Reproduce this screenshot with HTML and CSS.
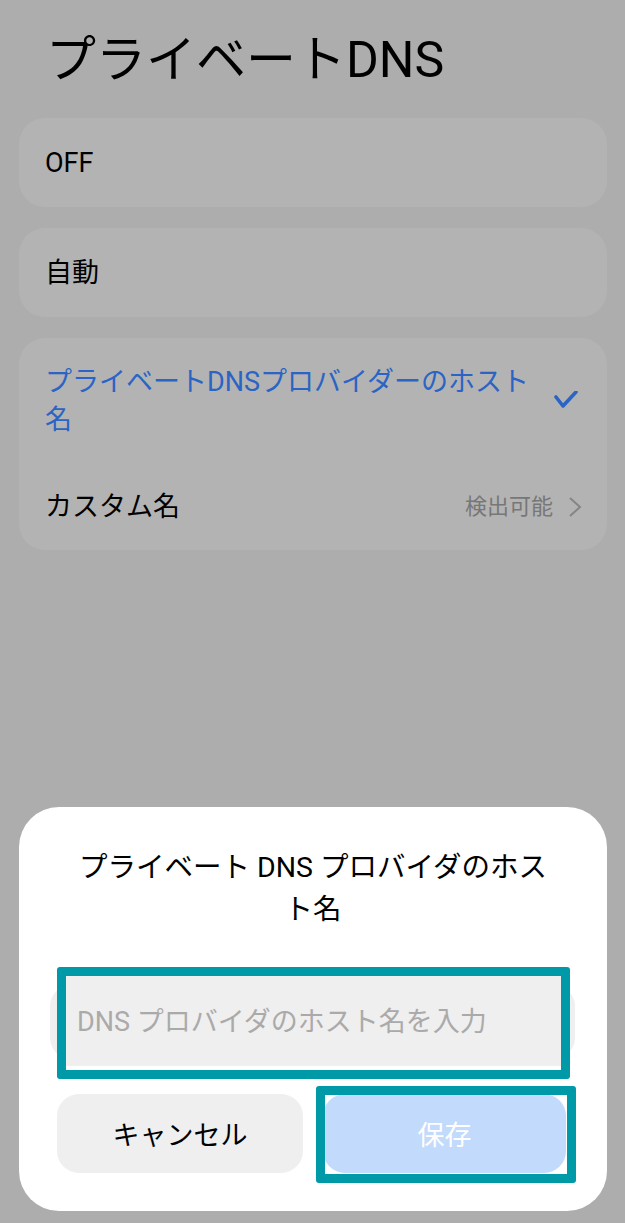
FILE: index.html
```html
<!DOCTYPE html>
<html lang="ja">
<head>
    <meta charset="UTF-8">
    <meta name="viewport" content="width=device-width, initial-scale=1.0">
    <title>プライベートDNS</title>
    <link rel="stylesheet" href="styles.css">
</head>
<body>
    <div class="page">
        <h1 class="page-title">プライベートDNS</h1>

        <div class="card">
            <div class="item">
                <span class="item-label">OFF</span>
            </div>
        </div>

        <div class="card">
            <div class="item">
                <span class="item-label">自動</span>
            </div>
        </div>

        <div class="card">
            <div class="item item-selected">
                <span class="item-label">プライベートDNSプロバイダーのホスト名</span>
                <svg class="check" width="24" height="20" viewBox="0 0 24 20">
                    <path d="M2 6 L9 15 L22 1" fill="none" stroke="#2a64c4" stroke-width="3.6" stroke-linecap="round" stroke-linejoin="round"/>
                </svg>
            </div>
            <div class="item item-last">
                <span class="item-label">カスタム名</span>
                <span class="item-value">検出可能</span>
                <svg class="chevron" width="14" height="20" viewBox="0 0 14 20">
                    <path d="M2 1 L12 10 L2 19" fill="none" stroke="#858585" stroke-width="2"/>
                </svg>
            </div>
        </div>
    </div>

    <div class="dialog">
        <h2 class="dialog-title">プライベート DNS プロバイダのホスト名</h2>

        <div class="field">
            <div class="highlight field-highlight"></div>
            <input class="field-input" type="text" placeholder="DNS プロバイダのホスト名を入力">
        </div>

        <div class="dialog-buttons">
            <button class="btn btn-cancel" type="button">キャンセル</button>
            <div class="save-wrap">
                <button class="btn btn-save" type="button">保存</button>
                <div class="highlight save-highlight"></div>
            </div>
        </div>
    </div>
</body>
</html>
```

FILE: styles.css
```css
body {
    font-family: Roboto, "Noto Sans CJK JP", sans-serif;
    margin: 0;
    background-color: #adadad;
    color: #000;
    height: 1223px;
    overflow: hidden;
}

.page {
    padding: 30px 18px 0 19px;
}

.page-title {
    margin: 0 0 28px 27px;
    font-size: 50px;
    font-weight: 400;
    line-height: 60px;
}

.card {
    background-color: #b3b3b3;
    border-radius: 26px;
    margin-bottom: 21px;
}

.item {
    display: flex;
    align-items: center;
    padding: 26px 25px 25px 26px;
    font-size: 27px;
    line-height: 38px;
}

.item-last {
    padding-top: 24px;
    padding-bottom: 24px;
}

.item-label {
    flex: 1;
}

.item-selected {
    padding-top: 25px;
    color: #2a64c4;
}

.item-selected .item-label {
    margin-right: 14px;
}

.check {
    display: block;
    margin-right: 4px;
}

.item-value {
    font-size: 22px;
    color: #777;
    margin-right: 15px;
}

.chevron {
    display: block;
}

.dialog {
    position: fixed;
    left: 19px;
    right: 18px;
    bottom: 12px;
    background-color: #fff;
    border-radius: 40px;
    padding: 40px 0 38px;
}

.dialog-title {
    margin: 0 55px;
    font-size: 28.5px;
    font-weight: 400;
    line-height: 42px;
    text-align: center;
}

.field {
    position: relative;
    margin: 55px 32px 0 31px;
    height: 72px;
    background-color: #efefef;
    border-radius: 20px;
}

.field-input {
    position: relative;
    z-index: 1;
    display: block;
    width: 100%;
    height: 100%;
    box-sizing: border-box;
    padding: 0 20px 0 27px;
    border: none;
    background: transparent;
    font-family: inherit;
    font-size: 27px;
    outline: none;
}

.field-input::placeholder {
    color: #aaa;
}

.highlight {
    position: absolute;
    box-sizing: border-box;
    border: 9px solid #0099a8;
    border-radius: 3px;
    pointer-events: none;
}

.field-highlight {
    z-index: 0;
    left: 7px;
    right: 5px;
    top: -19px;
    bottom: -21px;
    background-color: #efefef;
    box-shadow: inset 0 -4px 0 #fff;
}

.dialog-buttons {
    display: grid;
    grid-template-columns: 246px 1fr;
    gap: 20px;
    margin: 36px 41px 0 38px;
}

.btn {
    display: block;
    width: 100%;
    height: 79px;
    border: none;
    border-radius: 22px;
    font-family: inherit;
    font-size: 27px;
    font-weight: 400;
}

.btn-cancel {
    background-color: #efefef;
    color: #000;
}

.save-wrap {
    position: relative;
}

.btn-save {
    background-color: #c2dafb;
    color: #fff;
}

.save-highlight {
    left: -7px;
    right: -10px;
    top: -8px;
    bottom: -10px;
}
```
